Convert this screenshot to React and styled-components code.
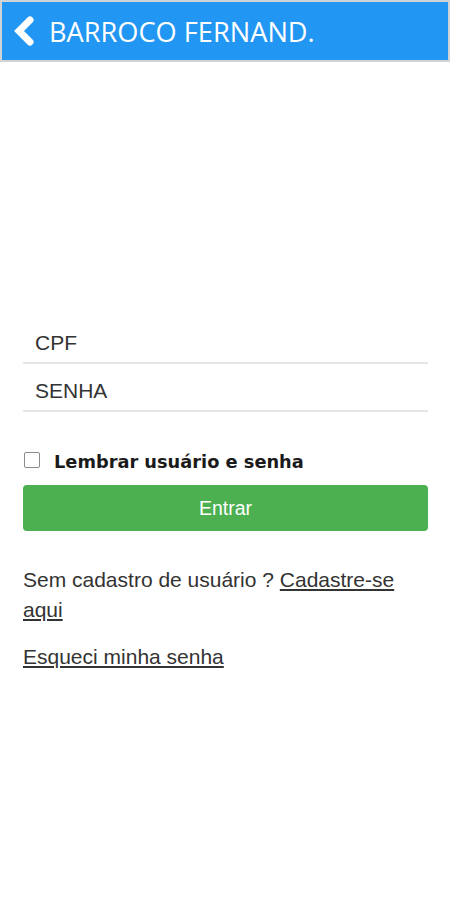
import React from "react";
import styled, { createGlobalStyle } from "styled-components";

const Global = createGlobalStyle`
  html, body { margin: 0; padding: 0; background: #fff; }
  body { font-family: "Liberation Sans", Arial, sans-serif; color: #333; }
  * { box-sizing: border-box; }
`;

const Page = styled.div`
  width: 450px;
  min-height: 900px;
  background: #fff;
`;

const Header = styled.header`
  height: 62px;
  background: #2196f3;
  border: 2px solid #cfd3d6;
  display: flex;
  align-items: center;
  gap: 12px;
  padding-left: 9px;
`;

const BackButton = styled.button`
  border: 0;
  background: none;
  padding: 0;
  width: 26px;
  height: 32px;
  display: flex;
  align-items: center;
  justify-content: center;
  cursor: pointer;
`;

const Title = styled.h1`
  margin: 0;
  font-family: "Open Sans", "Noto Sans", sans-serif;
  font-weight: 400;
  font-size: 27.2px;
  color: #fff;
  line-height: 1;
  padding-top: 1px;
`;

const Form = styled.form`
  display: flex;
  flex-direction: column;
  margin: 0 22px 0 23px;
  padding-top: 254px;
`;

const Field = styled.input`
  height: 48px;
  border: 0;
  border-bottom: 2px solid #e6e6e6;
  padding: 8px 12px 0;
  font-family: "Liberation Sans", Arial, sans-serif;
  font-size: 21px;
  color: #333;
  outline: none;
  background: transparent;
  &::placeholder { color: #333; opacity: 1; }
`;

const RememberRow = styled.label`
  display: flex;
  align-items: center;
  gap: 14px;
  margin-top: 37px;
  height: 24px;
  padding-left: 1px;
  cursor: pointer;
`;

const Check = styled.input`
  appearance: none;
  flex: none;
  margin: 0;
  width: 16px;
  height: 16px;
  border: 1px solid #8a8a8a;
  border-radius: 2px;
  background: #fff;
  position: relative;
  top: -1px;
`;

const RememberText = styled.span`
  font-family: "DejaVu Sans", Verdana, sans-serif;
  font-weight: 700;
  font-size: 17.8px;
  color: #1a1a1a;
`;

const SubmitButton = styled.button`
  margin-top: 12px;
  height: 46px;
  border: 0;
  border-radius: 4px;
  background: #4caf50;
  color: #fff;
  font-family: "Liberation Sans", Arial, sans-serif;
  font-size: 19.5px;
  cursor: pointer;
`;

const Text = styled.p`
  margin: ${(p) => p.$mt || 0}px 0 0;
  font-size: 21px;
  line-height: 30px;
  color: #333;
`;

const Link = styled.a`
  color: #333;
  text-decoration: underline;
  text-underline-offset: 2px;
  text-decoration-thickness: 1.5px;
  cursor: pointer;
`;

const ChevronLeft = () => (
  <svg width="24" height="30" viewBox="0 0 24 30" aria-hidden="true">
    <polyline
      points="18,4 7,15 18,26"
      fill="none"
      stroke="#fff"
      strokeWidth="7"
      strokeLinecap="round"
      strokeLinejoin="miter"
    />
  </svg>
);

export default function App() {
  return (
    <Page>
      <Global />
      <Header>
        <BackButton aria-label="Voltar">
          <ChevronLeft />
        </BackButton>
        <Title>BARROCO FERNAND.</Title>
      </Header>
      <Form onSubmit={(e) => e.preventDefault()}>
        <Field type="text" placeholder="CPF" />
        <Field type="password" placeholder="SENHA" />
        <RememberRow>
          <Check type="checkbox" />
          <RememberText>Lembrar usuário e senha</RememberText>
        </RememberRow>
        <SubmitButton type="submit">Entrar</SubmitButton>
        <Text $mt={34}>
          Sem cadastro de usuário ? <Link>Cadastre-se aqui</Link>
        </Text>
        <Text $mt={17}>
          <Link>Esqueci minha senha</Link>
        </Text>
      </Form>
    </Page>
  );
}
